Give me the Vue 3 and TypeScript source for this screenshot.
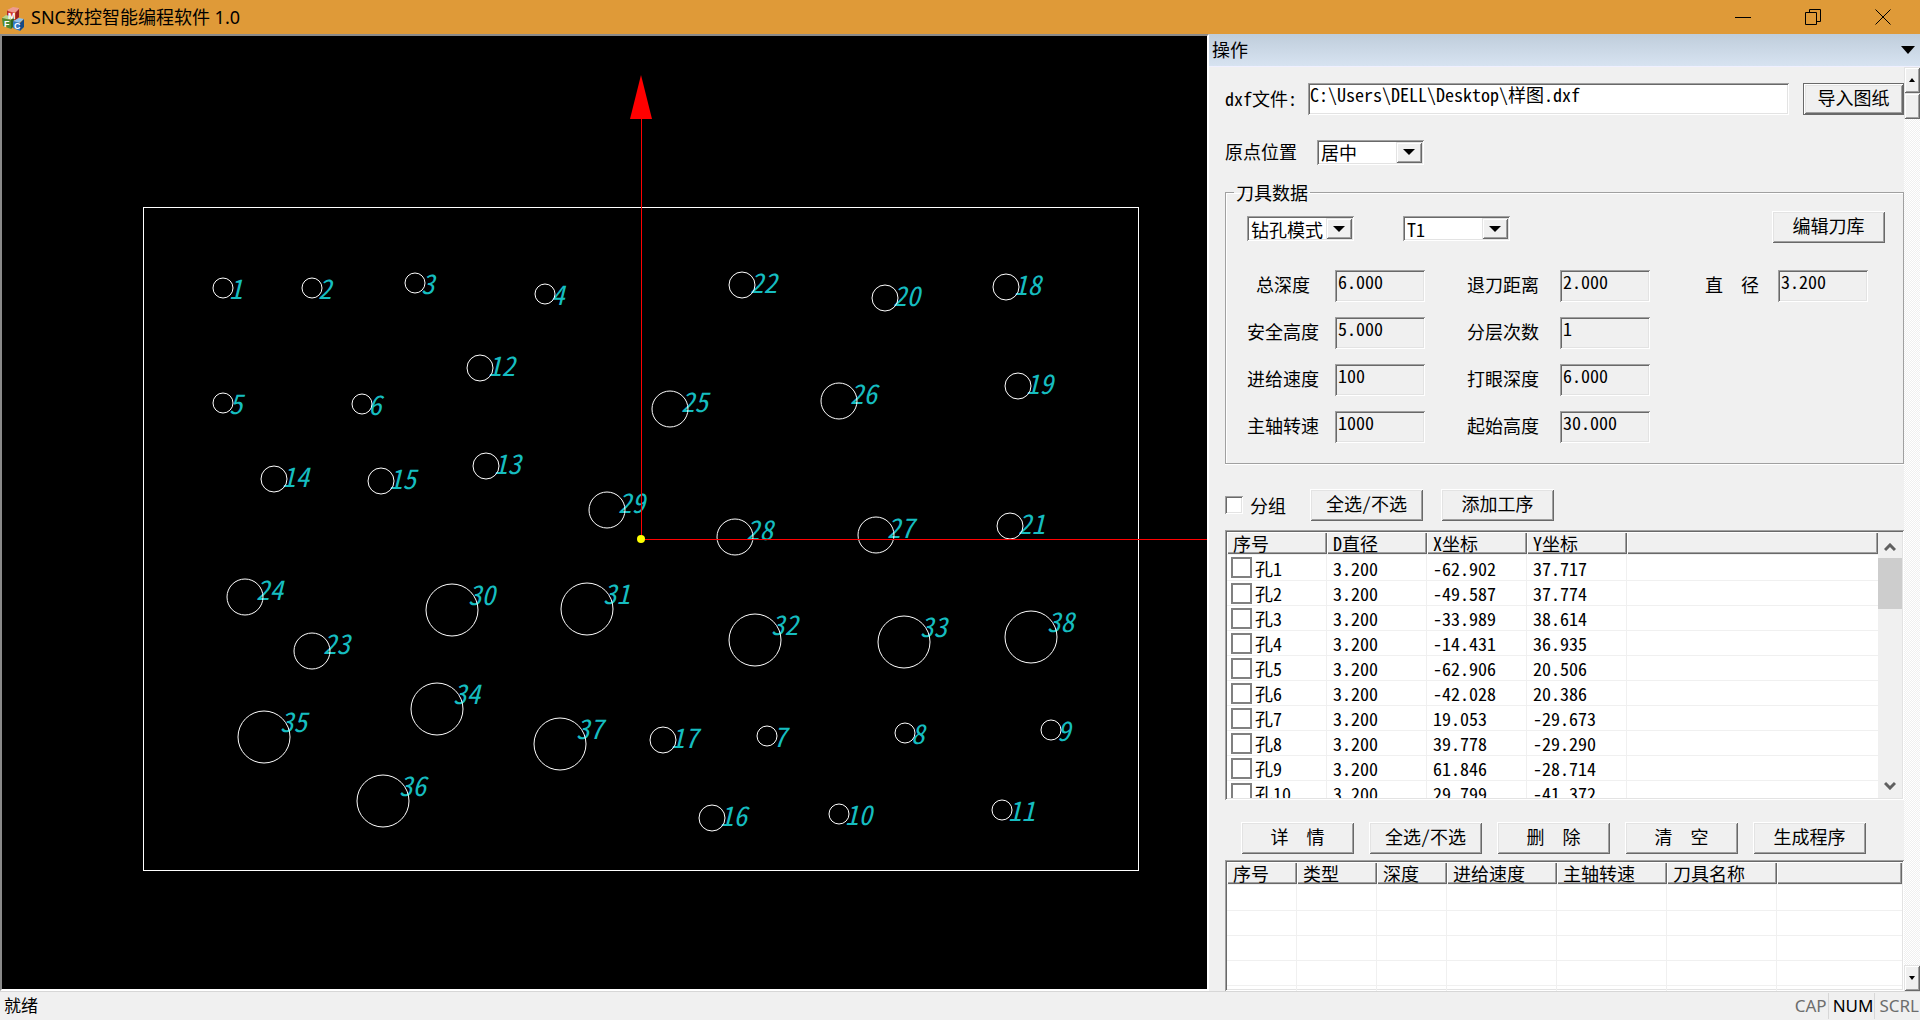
<script setup lang="ts">
import { ref } from 'vue'

interface Hole { id: number; x: number; y: number; r: number }

const S = 10
const M = 13
const L = 18
const XL = 26

const holes: Hole[] = [
  { id: 1, x: 223, y: 288, r: S }, { id: 2, x: 312, y: 288, r: S },
  { id: 3, x: 415, y: 283, r: S }, { id: 4, x: 545, y: 294, r: S },
  { id: 5, x: 223, y: 403, r: S }, { id: 6, x: 362, y: 404, r: S },
  { id: 7, x: 767, y: 736, r: S }, { id: 8, x: 905, y: 733, r: S },
  { id: 9, x: 1051, y: 730, r: S }, { id: 10, x: 839, y: 814, r: S },
  { id: 11, x: 1002, y: 810, r: S }, { id: 12, x: 480, y: 368, r: M },
  { id: 13, x: 486, y: 466, r: M }, { id: 14, x: 274, y: 479, r: M },
  { id: 15, x: 381, y: 481, r: M }, { id: 16, x: 712, y: 818, r: M },
  { id: 17, x: 663, y: 740, r: M }, { id: 18, x: 1006, y: 287, r: M },
  { id: 19, x: 1018, y: 386, r: M }, { id: 20, x: 885, y: 298, r: M },
  { id: 21, x: 1010, y: 526, r: M }, { id: 22, x: 742, y: 285, r: M },
  { id: 23, x: 312, y: 651, r: L }, { id: 24, x: 245, y: 597, r: L },
  { id: 25, x: 670, y: 409, r: L }, { id: 26, x: 839, y: 401, r: L },
  { id: 27, x: 876, y: 535, r: L }, { id: 28, x: 735, y: 537, r: L },
  { id: 29, x: 607, y: 510, r: L }, { id: 30, x: 452, y: 610, r: XL },
  { id: 31, x: 587, y: 609, r: XL }, { id: 32, x: 755, y: 640, r: XL },
  { id: 33, x: 904, y: 642, r: XL }, { id: 34, x: 437, y: 709, r: XL },
  { id: 35, x: 264, y: 737, r: XL }, { id: 36, x: 383, y: 801, r: XL },
  { id: 37, x: 560, y: 744, r: XL }, { id: 38, x: 1031, y: 637, r: XL },
]

const labelX = (h: Hole) => h.x + Math.round(h.r * 0.6)
const labelY = (h: Hole) => h.y - h.r + 21

const fieldColumns = [
  [
    { id: 'depth', label: '总深度', value: '6.000' },
    { id: 'safe', label: '安全高度', value: '5.000' },
    { id: 'feed', label: '进给速度', value: '100' },
    { id: 'spindle', label: '主轴转速', value: '1000' },
  ],
  [
    { id: 'retract', label: '退刀距离', value: '2.000' },
    { id: 'layers', label: '分层次数', value: '1' },
    { id: 'drill', label: '打眼深度', value: '6.000' },
    { id: 'start', label: '起始高度', value: '30.000' },
  ],
  [{ id: 'diameter', label: '直　径', value: '3.200' }],
]

const rows = [
  ['孔1', '3.200', '-62.902', '37.717'],
  ['孔2', '3.200', '-49.587', '37.774'],
  ['孔3', '3.200', '-33.989', '38.614'],
  ['孔4', '3.200', '-14.431', '36.935'],
  ['孔5', '3.200', '-62.906', '20.506'],
  ['孔6', '3.200', '-42.028', '20.386'],
  ['孔7', '3.200', '19.053', '-29.673'],
  ['孔8', '3.200', '39.778', '-29.290'],
  ['孔9', '3.200', '61.846', '-28.714'],
  ['孔10', '3.200', '29.799', '-41.372'],
]

const file = ref('C:\\Users\\DELL\\Desktop\\样图.dxf')
const grouped = ref(false)
const actions = ['详　情', '全选/不选', '删　除', '清　空', '生成程序']
const steps = ['序号', '类型', '深度', '进给速度', '主轴转速', '刀具名称']
</script>

<template>
  <div class="window">
    <header class="titlebar">
      <svg class="logo" width="24" height="30" viewBox="0 0 24 30">
        <path d="M5 8l4 3v8l-4-3z" fill="#a82a28" />
        <path d="M5 8l6-3 6 1-1 4-7 1z" fill="#ee9b90" />
        <path d="M6 9l7 2v8l-7-2z" fill="#cf3a34" />
        <path d="M13 11l4-4v8l-4 4z" fill="#9c2020" />
        <path d="M0 16l4-3 8 2-3 3z" fill="#b4d78c" />
        <path d="M0 16l9 2v9l-8-3z" fill="#4c8a35" />
        <path d="M9 18l3-3v9l-3 3z" fill="#2f6420" />
        <path d="M11 19l6-3 5 1-5 4z" fill="#8fc2ee" />
        <path d="M11 19l7 2v8l-7-3z" fill="#2f78c4" />
        <path d="M18 21l4-4v8l-4 4z" fill="#174a86" />
        <text x="6" y="17">M</text>
        <text x="2" y="25">F</text>
        <text x="12" y="27">C</text>
      </svg>
      <h1>SNC数控智能编程软件 1.0</h1>
      <div class="win-buttons">
        <button aria-label="最小化"><svg width="16" height="16"><path d="M0 8.5h16" /></svg></button>
        <button aria-label="还原"><svg width="16" height="16"><path d="M.5 3.500h11v12H.5zM4.500 3.500V.5h11v12h-4" /></svg></button>
        <button aria-label="关闭"><svg width="16" height="16"><path d="M.5 .5l15 15M15.500 .5l-15 15" /></svg></button>
      </div>
    </header>

    <div class="work">
      <main class="canvas">
        <svg viewBox="2 36 1205 953" preserveAspectRatio="xMidYMid meet">
          <rect class="outline" x="143" y="207" width="995" height="663" />
          <g v-for="h in holes" :key="h.id">
            <text :x="labelX(h)" :y="labelY(h)">{{ h.id }}</text>
            <circle :cx="h.x" :cy="h.y" :r="h.r" />
          </g>
          <path class="axis" d="M641 119V539H1207" />
          <path class="arrow" d="M641 75l11 44h-22z" />
          <circle class="origin" cx="641" cy="539" r="4" />
        </svg>
      </main>

      <aside class="panel">
        <div class="panel-head">
          <span>操作</span>
          <button aria-label="菜单"><svg width="14" height="8"><path d="M0 0h14l-7 8z" /></svg></button>
        </div>
        <div class="panel-main">
          <div class="form">
            <div class="line file-line">
              <label for="file">dxf文件:</label>
              <input id="file" v-model="file" class="sunken" type="text" />
              <button class="btn default">导入图纸</button>
            </div>
            <div class="line origin-line">
              <label for="origin">原点位置</label>
              <span class="combo"><select id="origin"><option>居中</option></select><i></i></span>
            </div>

            <fieldset>
              <legend>刀具数据</legend>
              <div class="line tool-line">
                <span class="combo"><select aria-label="模式"><option>钻孔模式</option></select><i></i></span>
                <span class="combo"><select aria-label="刀具"><option>T1</option></select><i></i></span>
                <button class="btn">编辑刀库</button>
              </div>
              <div class="columns">
                <div v-for="(col, c) in fieldColumns" :key="c" class="col">
                  <div v-for="f in col" :key="f.id" class="field">
                    <label :for="f.id">{{ f.label }}</label>
                    <input :id="f.id" class="sunken" type="text" readonly :value="f.value" />
                  </div>
                </div>
              </div>
            </fieldset>

            <div class="line group-line">
              <label class="group"><input v-model="grouped" class="sunken" type="checkbox" />分组</label>
              <button class="btn">全选/不选</button>
              <button class="btn">添加工序</button>
            </div>

            <div class="list holes sunken">
              <div class="list-view">
                <table>
                  <colgroup><col class="w100" /><col class="w100" /><col class="w100" /><col class="w100" /><col /></colgroup>
                  <thead><tr><th>序号</th><th>D直径</th><th>X坐标</th><th>Y坐标</th><th></th></tr></thead>
                  <tbody>
                    <tr v-for="r in rows" :key="r[0]">
                      <td><label><input type="checkbox" />{{ r[0] }}</label></td>
                      <td>{{ r[1] }}</td><td>{{ r[2] }}</td><td>{{ r[3] }}</td><td></td>
                    </tr>
                  </tbody>
                </table>
              </div>
              <div class="vbar">
                <button aria-label="向上"><svg width="12" height="9"><path d="M1 7l5-5 5 5" /></svg></button>
                <div class="thumb"></div>
                <button aria-label="向下"><svg width="12" height="9"><path d="M1 2l5 5 5-5" /></svg></button>
              </div>
            </div>

            <div class="line action-line">
              <button v-for="a in actions" :key="a" class="btn">{{ a }}</button>
            </div>

            <div class="list steps sunken">
              <div class="list-view">
                <table>
                  <colgroup><col class="w70" /><col class="w80" /><col class="w70" /><col class="w110" /><col class="w110" /><col class="w110" /><col /></colgroup>
                  <thead><tr><th v-for="s in steps" :key="s">{{ s }}</th><th></th></tr></thead>
                  <tbody><tr v-for="n in 5" :key="n"><td v-for="m in 7" :key="m"></td></tr></tbody>
                </table>
              </div>
            </div>
          </div>

          <div class="scroll">
            <button aria-label="上滚"><svg width="6" height="4"><path d="M0 4h6l-3-4z" /></svg></button>
            <div class="scroll-thumb"></div>
            <button class="down" aria-label="下滚"><svg width="6" height="4"><path d="M0 0h6l-3 4z" /></svg></button>
          </div>
        </div>
      </aside>
    </div>

    <footer class="status">
      <span class="ready">就绪</span>
      <span class="key">CAP</span>
      <span class="key on">NUM</span>
      <span class="key">SCRL</span>
    </footer>
  </div>
</template>

<style>
body { margin: 0; }
</style>

<style scoped>
* { box-sizing: border-box; }
.window {
  display: flex; flex-direction: column; height: 100vh; overflow: hidden;
  background: #f0f0f0; color: #000;
  font: 18px/24px "Noto Sans Mono CJK SC", "Liberation Mono", "Noto Sans CJK SC", monospace;
}
button, input, select { font: inherit; color: inherit; margin: 0; border: 0; border-radius: 0; }
button { padding: 0; background: none; }

.titlebar { display: flex; align-items: center; height: 34px; flex: none; background: #df9a38; padding-left: 2px; }
.logo { flex: none; }
.logo text { fill: #fff; font: bold 9px "Liberation Sans", sans-serif; }
h1 { margin: 0 0 0 5px; flex: 1; font: 18px/34px "Noto Sans", "Noto Sans CJK SC", sans-serif; }
.win-buttons { display: flex; margin-right: 2px; }
.win-buttons button { width: 70px; height: 34px; display: grid; place-items: center; }
.win-buttons path { fill: none; stroke: #000; }

.work { display: flex; flex: 1; min-height: 0; }
.canvas {
  flex: 1; min-width: 0; background: #000; border: 2px solid #fff;
  border-top-color: #8a8a8a; border-left-color: #8a8a8a;
}
.canvas svg { display: block; width: 100%; height: 100%; }
.canvas circle, .outline { fill: none; stroke: #fff; }
.outline { shape-rendering: crispEdges; }
.canvas text { fill: #16bdc0; font: italic 27px "Noto Sans Mono CJK SC", "Liberation Sans Narrow", sans-serif; }
.axis { fill: none; stroke: #f00; shape-rendering: crispEdges; }
.arrow { fill: #f00; }
.canvas .origin { fill: #ff0; stroke: none; }

.panel { width: 711px; flex: none; display: flex; flex-direction: column; min-height: 0; }
.panel-head {
  height: 32px; flex: none; display: flex; align-items: center; justify-content: space-between;
  padding: 0 5px 0 3px; background: linear-gradient(#bfcddb, #d7e3f1);
  font-family: "Noto Sans", "Noto Sans CJK SC", sans-serif;
}
.panel-head button { display: grid; }
.panel-main { display: flex; flex: 1; min-height: 0; border-top: 1px solid #f0f0ff; }
.form { flex: 1; min-width: 0; display: flex; flex-direction: column; padding: 16px 0 0 16px; }
.line { display: flex; align-items: center; flex: none; }

.sunken { background: #fff; box-shadow: inset 1px 1px #a0a0a0, inset -1px -1px #fff, inset 2px 2px #696969, inset -2px -2px #e3e3e3; }
.btn {
  width: 113px; height: 32px; padding-bottom: 4px; background: #f0f0f0; white-space: pre;
  box-shadow: inset 1px 1px #fff, inset -1px -1px #696969, inset 2px 2px #e3e3e3, inset -2px -2px #a0a0a0;
}
.btn.default { width: 101px; border: 1px solid #696969; }
.file-line label { width: 83px; padding-bottom: 2px; }
.file-line input { flex: 1; min-width: 0; height: 32px; padding: 0 2px 10px; margin-right: 14px; }
.origin-line { margin-top: 24px; }
.origin-line label { width: 92px; padding-bottom: 2px; }
.combo { position: relative; display: block; width: 107px; height: 25px; }
.combo select {
  appearance: none; width: 100%; height: 100%; padding: 0 26px 0 4px; background: #fff; line-height: 22px;
  box-shadow: inset 1px 1px #a0a0a0, inset -1px -1px #fff, inset 2px 2px #696969, inset -2px -2px #e3e3e3;
}
.combo i {
  position: absolute; top: 2px; right: 2px; width: 26px; height: 21px; background: #f0f0f0; pointer-events: none;
  box-shadow: inset 1px 1px #e3e3e3, inset -1px -1px #696969, inset 2px 2px #fff, inset -2px -2px #a0a0a0;
  display: grid; place-items: center;
}
.combo i::before { content: ""; border: 6px solid transparent; border-top-color: #000; border-bottom: 0; }

fieldset { margin: 15px 0 0; padding: 7px 18px 20px 21px; border: 1px solid #a0a0a0; box-shadow: inset 1px 1px #fff, 0 1px #fff; min-width: 0; }
legend { padding: 0 2px; margin-left: -13px; }
.tool-line .combo { margin-top: 3px; }
.tool-line .combo + .combo { margin-left: 49px; }
.tool-line .btn { margin-left: auto; }
.columns { display: flex; align-items: flex-start; gap: 42px; margin-top: 27px; }
.col { display: grid; gap: 15px; }
.col:nth-child(3) { margin-left: 4px; }
.field { display: flex; align-items: center; }
.field label { width: 72px; text-align: center; margin-right: 16px; padding-bottom: 4px; }
.col:nth-child(2) label { margin-right: 21px; }
.col:nth-child(3) label { margin-right: 10px; }
.field input { width: 90px; height: 32px; padding: 0 3px 10px; background: #f0f0f0; }

.group-line { margin-top: 25px; gap: 18px; }
.group { display: flex; align-items: center; width: 67px; gap: 7px; }
.group input { appearance: none; width: 18px; height: 18px; }

.list { display: flex; padding: 0 2px 2px; overflow: hidden; }
.list-view { flex: 1; min-width: 0; overflow: hidden; padding-top: 2px; }
.holes { height: 270px; margin-top: 9px; flex: none; }
.steps { margin-top: 6px; flex: 1; min-height: 0; padding-bottom: 0; }
table { width: 100%; border-collapse: separate; border-spacing: 0; table-layout: fixed; }
.w70 { width: 70px; } .w80 { width: 80px; } .w100 { width: 100px; } .w110 { width: 110px; }
th {
  height: 22px; padding: 0 6px; font-weight: normal; text-align: left; line-height: 22px; background: #f0f0f0;
  box-shadow: inset 1px 1px #fff, inset -1px -1px #696969, inset -2px -2px #a0a0a0;
}
td { height: 25px; padding: 0 6px; border-bottom: 1px solid #f0f0f0; border-right: 1px solid #f0f0f0; line-height: 24px; white-space: nowrap; }
td:last-child { border-right: 0; }
td:first-child { padding-left: 4px; }
tbody tr:first-child td { border-top: 1px solid #f0f0f0; height: 27px; }
td label { display: flex; align-items: center; gap: 3px; height: 24px; }
td input { appearance: none; width: 21px; height: 21px; flex: none; border: 2px solid #808080; }
.vbar { width: 24px; flex: none; display: flex; flex-direction: column; margin-top: 2px; background: #f0f0f0; }
.vbar button { height: 26px; padding-top: 4px; display: grid; place-items: center; }
.vbar button:last-child { margin-top: auto; padding-top: 0; }
.vbar path { fill: none; stroke: #606060; stroke-width: 3; }
.thumb { height: 51px; background: #cdcdcd; }

.action-line { margin: 22px 0 0 16px; gap: 15px; }

.scroll { width: 16px; flex: none; display: flex; flex-direction: column; background: repeating-conic-gradient(#fff 0 25%, #f0f0f0 0 50%) 0 0 / 2px 2px; }
.scroll button, .scroll-thumb {
  height: 26px; flex: none; display: grid; place-items: center; background: #f0f0f0;
  box-shadow: inset 1px 1px #e3e3e3, inset -1px -1px #696969, inset 2px 2px #fff, inset -2px -2px #a0a0a0;
}
.scroll .down { margin-top: auto; }

.status {
  height: 29px; flex: none; display: flex; align-items: center; border-top: 1px solid #d7d7d7; padding-left: 4px;
  font: 17px/26px "Noto Sans", "Noto Sans CJK SC", sans-serif;
}
.ready { flex: 1; }
.key { padding: 0 1px 0 4px; color: #6d6d6d; border-left: 1px solid #d7d7d7; }
.key:nth-child(2) { border-left: 0; }
.key.on { color: #000; }
</style>
